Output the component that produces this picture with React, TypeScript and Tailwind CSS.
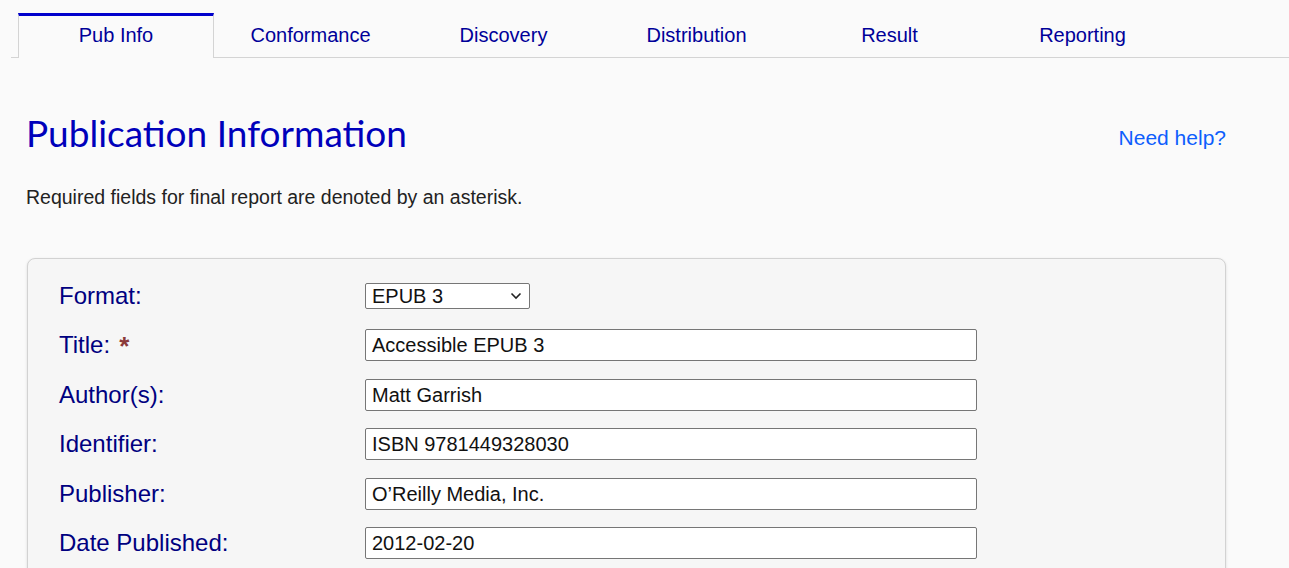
import React from 'react';

const tabs = ['Pub Info', 'Conformance', 'Discovery', 'Distribution', 'Result', 'Reporting'];

const fields = [
  { label: 'Title:', value: 'Accessible EPUB 3', required: true },
  { label: 'Author(s):', value: 'Matt Garrish' },
  { label: 'Identifier:', value: 'ISBN 9781449328030' },
  { label: 'Publisher:', value: 'O’Reilly Media, Inc.' },
  { label: 'Date Published:', value: '2012-02-20' },
];

export default function App() {
  return (
    <div className="min-h-[568px] bg-[#fafafa] font-['Liberation_Sans',Arial,sans-serif] overflow-hidden">
      {/* tab bar */}
      <div className="pt-[13px] pl-[11px]">
        <div className="flex border-b border-[#d4d4d4] pl-[7px]">
          {tabs.map((t, i) => (
            <div
              key={t}
              className={
                i === 0
                  ? 'w-[196px] h-[45px] -mb-px pb-[4px] flex items-center justify-center border-t-[3px] border-t-[#0000cc] border-x border-x-[#d4d4d4] bg-[#fafafa] text-[20px] text-[#000099]'
                  : 'w-[193px] h-[44px] flex items-center justify-center text-[20px] text-[#000099]'
              }
            >
              {t}
            </div>
          ))}
        </div>
      </div>

      <div className="pl-[26px] pr-[63px]">
        <div className="flex items-start justify-between h-[40px] mt-[55px]">
          <h1 className="font-['Lato',sans-serif] text-[37px] leading-[40px] text-[#0000bb]">Publication Information</h1>
          <a className="pt-[9px] text-[21px] leading-[32px] text-[#0d5efd]">Need help?</a>
        </div>
        <p className="mt-[30px] text-[19.5px] leading-[29px] text-[#222]">Required fields for final report are denoted by an asterisk.</p>

        <div className="mt-[46px] ml-px rounded-[8px] border border-[#d2d2d2] bg-[#f6f6f6] shadow-[0_1px_3px_rgba(0,0,0,0.12)] pl-[31px] pt-[24px] pb-[24px]">
          <div className="flex items-center h-[26px]">
            <label className="w-[306px] text-[24px] leading-[26px] text-[#000080]">Format:</label>
            <div className="w-[165px] h-[26px] border border-[#767676] rounded-[2px] bg-white flex items-center justify-between pl-[6px] pr-[7px] text-[20px] text-[#111]">
              <span>EPUB 3</span>
              <svg width="12" height="8" viewBox="0 0 12 8" fill="none" stroke="#222" strokeWidth="1.6">
                <path d="M1.5 1.5 L6 6 L10.5 1.5" />
              </svg>
            </div>
          </div>
          {fields.map((f, i) => (
            <div key={f.label} className={`flex items-center h-[32px] ${i === 0 ? 'mt-[20px]' : 'mt-[17.5px]'}`}>
              <label className="w-[306px] text-[24px] leading-[32px] text-[#000080]">
                {f.label}
                {f.required && <span className="ml-[9px] text-[26px] font-bold leading-none align-[-2px] text-[#8b3a3a]">*</span>}
              </label>
              <div className="w-[612px] h-[32px] border border-[#767676] rounded-[2px] bg-white flex items-center pl-[6px] text-[20px] text-[#111]">
                {f.value}
              </div>
            </div>
          ))}
        </div>
      </div>
    </div>
  );
}
